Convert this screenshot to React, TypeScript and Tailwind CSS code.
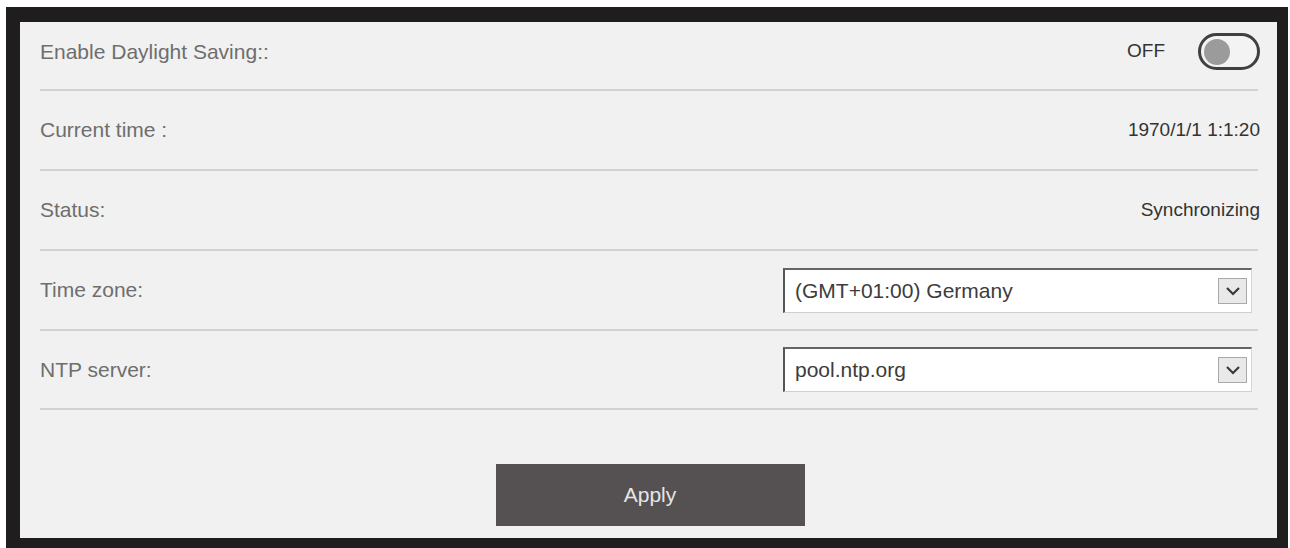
import React from "react";

const rows = [
  { label: "Current time :", value: "1970/1/1 1:1:20" },
  { label: "Status:", value: "Synchronizing" },
];

const selects = [
  { label: "Time zone:", value: "(GMT+01:00) Germany" },
  { label: "NTP server:", value: "pool.ntp.org" },
];

const Chevron = () => (
  <div className="flex h-[26px] w-[29px] items-center justify-center border border-[#a9a9a9] bg-[#e9e9e9]">
    <svg width="16" height="10" viewBox="0 0 16 10" fill="none">
      <path d="M2 2l6 6 6-6" stroke="#3a3a3a" strokeWidth="2.2" />
    </svg>
  </div>
);

const FakeSelect = ({ value }: { value: string }) => (
  <div className="flex h-[45px] w-[469px] items-center justify-between border-t-2 border-l-2 border-r border-b border-t-[#666] border-l-[#555] border-r-[#d6d6d6] border-b-[#cfcfcf] bg-white pl-[10px] pr-[4px]">
    <span className="text-[21px] text-[#3c3c3c]">{value}</span>
    <Chevron />
  </div>
);

export default function App() {
  return (
    <div
      className="h-[548px] w-[1290px] bg-white pt-[7px] pl-[6px] pr-[2px]"
      style={{ fontFamily: '"Liberation Sans", Arial, sans-serif' }}
    >
      <div className="flex h-[541px] flex-col border-t-[15px] border-l-[14px] border-r-[11px] border-b-[10px] border-[#1f1d1e] bg-[#f1f1f1] pl-[20px] pr-[19px]">
        {/* daylight saving toggle */}
        <div className="flex h-[69px] shrink-0 items-center justify-between border-b-2 border-[#d2d2d2] pb-[8px]">
          <span className="text-[21px] text-[#6e6e6e]">Enable Daylight Saving::</span>
          <div className="-mr-[2px] flex items-center gap-[33px]">
            <span className="text-[19px] text-[#333]">OFF</span>
            <div className="flex h-[37px] w-[62px] items-center rounded-full border-[3px] border-[#404040] bg-[#f3f3f3] pl-[3px]">
              <div className="h-[26px] w-[26px] rounded-full bg-[#9b9b9b]" />
            </div>
          </div>
        </div>

        {rows.map((r) => (
          <div key={r.label} className="flex h-[80px] shrink-0 items-center justify-between border-b-2 border-[#d2d2d2]">
            <span className="text-[21px] text-[#6e6e6e]">{r.label}</span>
            <span className="-mr-[2px] text-[19px] text-[#333]">{r.value}</span>
          </div>
        ))}

        {selects.map((s, i) => (
          <div
            key={s.label}
            className={`flex shrink-0 items-center justify-between border-b-2 border-[#d2d2d2] pr-[6px] ${i === 1 ? "h-[79px]" : "h-[80px]"}`}
          >
            <span className="text-[21px] text-[#6e6e6e]">{s.label}</span>
            <FakeSelect value={s.value} />
          </div>
        ))}

        <div className="mt-[54px] flex justify-center">
          <button
            type="button"
            className="ml-[2px] h-[62px] w-[309px] bg-[#555152] text-[21px] text-[#e6e6e6]"
          >
            Apply
          </button>
        </div>
      </div>
    </div>
  );
}
